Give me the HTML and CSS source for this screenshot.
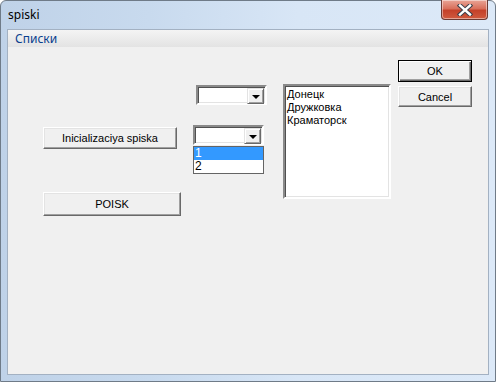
FILE: index.html
```html
<!DOCTYPE html>
<html lang="ru">

<head>
    <meta charset="UTF-8">
    <meta name="viewport" content="width=device-width, initial-scale=1.0">
    <title>spiski</title>
    <link rel="stylesheet" href="styles.css">
</head>

<body>
    <div class="window">
        <div class="titlebar">
            <span class="titletext">spiski</span>
            <div class="closebtn">
                <svg width="20" height="12" viewBox="0 0 20 12">
                    <path d="M5 1.5 L15 10.5 M15 1.5 L5 10.5" stroke="#3a3f4a" stroke-width="4.4" stroke-linecap="square" />
                    <path d="M5 1.5 L15 10.5 M15 1.5 L5 10.5" stroke="#ffffff" stroke-width="2.4" stroke-linecap="square" />
                </svg>
            </div>
        </div>
        <div class="client">
            <div class="tabhead">Списки</div>
            <div class="content">
                <div class="leftcol">
                    <button class="btn initbtn">Inicializaciya spiska</button>
                    <button class="btn poiskbtn">POISK</button>
                </div>
                <div class="midcol">
                    <div class="combo combo1">
                        <div class="combotext"></div>
                        <div class="combobtn"><span class="arrow"></span></div>
                    </div>
                    <div class="combowrap">
                        <div class="combo combo2">
                            <div class="combotext"></div>
                            <div class="combobtn"><span class="arrow"></span></div>
                        </div>
                        <div class="droplist">
                            <div class="dropitem selected">1</div>
                            <div class="dropitem">2</div>
                        </div>
                    </div>
                </div>
                <div class="listbox">
                    <div class="listitem">Донецк</div>
                    <div class="listitem">Дружковка</div>
                    <div class="listitem">Краматорск</div>
                </div>
                <div class="rightcol">
                    <button class="btn okbtn">OK</button>
                    <button class="btn cancelbtn">Cancel</button>
                </div>
            </div>
        </div>
    </div>
</body>

</html>
```

FILE: styles.css
```css
* {
    margin: 0;
    padding: 0;
    box-sizing: border-box;
}

body {
    width: 496px;
    height: 382px;
    overflow: hidden;
    font-family: "Liberation Sans", Arial, sans-serif;
    font-size: 11px;
}

.window {
    width: 496px;
    height: 382px;
    border: 1px solid #6f7b88;
    border-radius: 6px 6px 0 0;
    background: linear-gradient(90deg, #bfd2e8 0%, #c8daee 30%, #d8e6f6 60%, #dce9f8 100%);
    display: flex;
    flex-direction: column;
}

.titlebar {
    height: 28px;
    display: flex;
    justify-content: space-between;
    align-items: flex-start;
}

.titletext {
    font-family: "Noto Sans", "Open Sans", sans-serif;
    font-size: 12px;
    color: #000;
    margin-left: 7px;
    margin-top: 5px;
}

.closebtn {
    width: 47px;
    height: 20px;
    margin-right: 7px;
    margin-top: -1px;
    border: 1px solid #6a3a34;
    border-top: none;
    border-radius: 0 0 4px 4px;
    background: linear-gradient(180deg, #e9a597 0%, #d9705c 45%, #c4412a 55%, #d05a3f 100%);
    box-shadow: inset 0 0 0 1px rgba(255, 255, 255, 0.45);
    display: flex;
    justify-content: center;
    align-items: center;
}

.client {
    flex: 1;
    margin: 0 6px 6px 6px;
    border: 1px solid #a3b1c2;
    background-color: #f0f0f0;
    display: flex;
    flex-direction: column;
}

.tabhead {
    height: 17px;
    background: linear-gradient(180deg, #f4f4f4 0%, #e3e3e3 100%);
    color: #0a3f8e;
    font-family: "Noto Sans", "Open Sans", sans-serif;
    font-size: 12px;
    line-height: 17px;
    padding-left: 7px;
}

.content {
    flex: 1;
    display: flex;
    align-items: flex-start;
    padding-left: 35px;
}

.btn {
    font-family: "Liberation Sans", Arial, sans-serif;
    font-size: 11px;
    color: #000;
    background-color: #f0f0f0;
    border: 1px solid;
    border-color: #ffffff #696969 #696969 #ffffff;
    box-shadow: inset -1px -1px 0 #a0a0a0, inset 1px 1px 0 #e3e3e3;
    display: flex;
    justify-content: center;
    align-items: center;
}

.leftcol {
    width: 138px;
    margin-top: 80px;
    display: flex;
    flex-direction: column;
}

.initbtn {
    width: 134px;
    height: 22px;
}

.poiskbtn {
    width: 138px;
    height: 24px;
    margin-top: 43px;
}

.midcol {
    width: 74px;
    margin-left: 12px;
    display: flex;
    flex-direction: column;
}

.combo {
    width: 71px;
    height: 20px;
    background-color: #fff;
    border: 2px solid;
    border-color: #8a8a8a #ffffff #ffffff #8a8a8a;
    box-shadow: inset 1px 1px 0 #505050, inset -1px -1px 0 #e3e3e3;
    display: flex;
    justify-content: flex-end;
    padding: 1px;
}

.combo1 {
    margin-left: 3px;
    margin-top: 38px;
}

.combowrap {
    position: relative;
    margin-top: 20px;
}

.combotext {
    flex: 1;
}

.combobtn {
    width: 17px;
    height: 16px;
    background-color: #f0f0f0;
    border: 1px solid;
    border-color: #e3e3e3 #696969 #696969 #e3e3e3;
    box-shadow: inset 1px 1px 0 #fff, inset -1px -1px 0 #a0a0a0;
    display: flex;
    justify-content: center;
    align-items: center;
}

.arrow {
    width: 0;
    height: 0;
    border-left: 4px solid transparent;
    border-right: 4px solid transparent;
    border-top: 4px solid #000;
    margin-top: 1px;
}

.droplist {
    position: absolute;
    top: 21px;
    left: 0;
    width: 71px;
    height: 28px;
    background-color: #fff;
    border: 1px solid #646464;
}

.dropitem {
    height: 13px;
    line-height: 13px;
    padding-left: 1px;
    font-size: 12px;
    color: #000;
}

.dropitem.selected {
    background-color: #3399ff;
    color: #fff;
}

.listbox {
    width: 108px;
    height: 115px;
    margin-left: 16px;
    margin-top: 37px;
    background-color: #fff;
    border: 2px solid;
    border-color: #8a8a8a #ffffff #ffffff #8a8a8a;
    box-shadow: inset 1px 1px 0 #505050, inset -1px -1px 0 #e3e3e3;
    padding: 2px 2px;
}

.listitem {
    height: 13px;
    line-height: 13px;
    color: #000;
}

.rightcol {
    margin-left: 7px;
    margin-top: 13px;
    display: flex;
    flex-direction: column;
}

.okbtn {
    width: 74px;
    height: 22px;
    border: 1px solid #000;
    box-shadow: inset 1px 1px 0 #ffffff, inset -1px -1px 0 #696969, inset -2px -2px 0 #a0a0a0;
}

.cancelbtn {
    width: 74px;
    height: 21px;
    margin-top: 4px;
}
```
